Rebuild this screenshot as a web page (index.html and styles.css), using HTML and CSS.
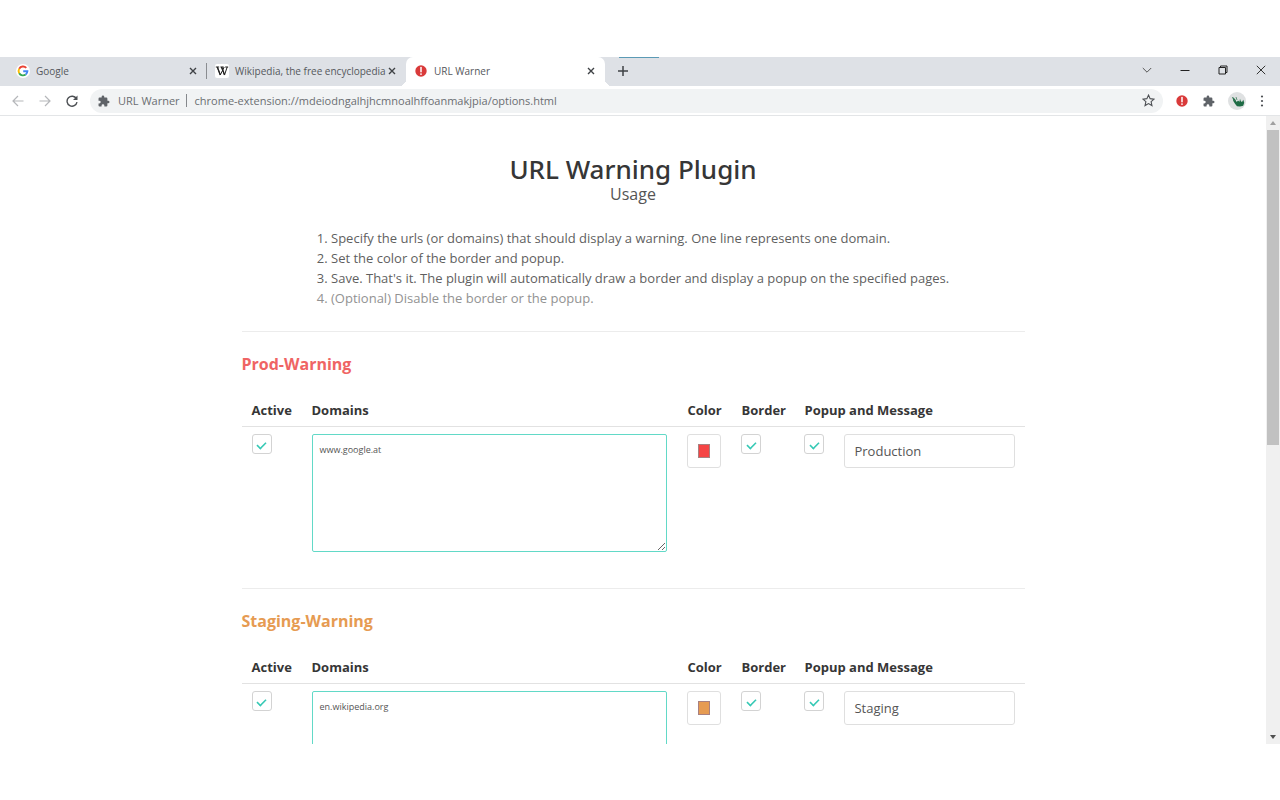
FILE: index.html
```html
<!DOCTYPE html>
<html lang="en">
<head>
<meta charset="utf-8">
<title>URL Warner</title>
<link rel="stylesheet" href="styles.css">
</head>
<body>
<svg class="defs" aria-hidden="true">
  <symbol id="puzzle" viewBox="1 0 23 23"><path d="M20.5 11H19V7a2 2 0 0 0-2-2h-4V3.500a2.500 2.500 0 0 0-5 0V5H4a2 2 0 0 0-2 2v3.800h1.500a2.700 2.700 0 0 1 0 5.400H2V20a2 2 0 0 0 2 2h3.800v-1.500a2.700 2.700 0 0 1 5.400 0V22H17a2 2 0 0 0 2-2v-4h1.500a2.500 2.500 0 0 0 0-5z" fill="#5f6368"/></symbol>
  <symbol id="alert" viewBox="0 0 12 12"><circle cx="6" cy="6" r="5.700" fill="#d93a3a"/><path d="M6 2.500v4.300" stroke="#fff" stroke-width="1.500" stroke-linecap="round"/><circle cx="6" cy="9.100" r=".9" fill="#fff"/></symbol>
  <symbol id="cross" viewBox="0 0 8 8"><path d="M1 1l6 6M7 1L1 7" stroke="#3f4246" stroke-width="1.400" fill="none"/></symbol>
</svg>
<div class="window">
  <header class="tabs">
    <div class="tab">
      <svg class="favicon" viewBox="0 0 14 14"><circle cx="7" cy="7" r="7" fill="#fff"/><g fill="none" stroke-width="1.900"><path d="M10.300 3.900A4.400 4.400 0 0 0 3.200 4.800" stroke="#ea4335"/><path d="M3.200 4.800A4.400 4.400 0 0 0 3.200 9.200" stroke="#fbbc05"/><path d="M3.200 9.200A4.400 4.400 0 0 0 9.700 10.500" stroke="#34a853"/><path d="M9.700 10.500A4.400 4.400 0 0 0 11.400 7.200H7.200" stroke="#4285f4"/></g></svg>
      <span class="tab-title">Google</span>
      <button class="close" aria-label="Close Google"><svg><use href="#cross"/></svg></button>
    </div>
    <div class="tab divided">
      <svg class="favicon" viewBox="0 0 14 14"><rect width="14" height="14" rx="2" fill="#fff"/><path d="M.8 3h3.400M5.400 3h3.300M10.200 3h3M2.300 3l3 8 3.900-8M6.300 3l3.200 8 2.700-8" fill="none" stroke="#222" stroke-width="1"/><path d="M2.300 3l3 8M6.700 3l2.900 8" stroke="#222" stroke-width="1.300"/></svg>
      <span class="tab-title">Wikipedia, the free encyclopedia</span>
      <button class="close" aria-label="Close Wikipedia"><svg><use href="#cross"/></svg></button>
    </div>
    <div class="tab active">
      <svg class="favicon small"><use href="#alert"/></svg>
      <span class="tab-title">URL Warner</span>
      <button class="close" aria-label="Close URL Warner"><svg><use href="#cross"/></svg></button>
    </div>
    <button class="new-tab" aria-label="New tab"><svg viewBox="0 0 10 10"><path d="M5 0v10M0 5h10" stroke="#3f4246" stroke-width="1.500"/></svg></button>
    <span class="accent"></span>
    <div class="window-buttons">
      <button aria-label="Search tabs"><svg viewBox="0 0 10 10"><path d="M.8 3L5 7.200 9.200 3" fill="none" stroke="#555" stroke-width="1"/></svg></button>
      <button aria-label="Minimize"><svg viewBox="0 0 10 10"><path d="M.5 5.500h9" stroke="#222"/></svg></button>
      <button aria-label="Restore"><svg viewBox="0 0 10 10"><path d="M1 2.500h6.500V9H1zM2.500 2.500V1H9v6.500H7.500" fill="none" stroke="#222"/></svg></button>
      <button aria-label="Close window"><svg viewBox="0 0 10 10"><path d="M.8.8l8.400 8.400M9.200.8L.8 9.200" stroke="#333" stroke-width="1"/></svg></button>
    </div>
  </header>
  <nav class="toolbar">
    <div class="nav-buttons">
      <button aria-label="Back"><svg viewBox="0 0 12 12"><path d="M11.500 6H1M6 1L1 6l5 5" fill="none" stroke="#b5b7ba" stroke-width="1.200"/></svg></button>
      <button aria-label="Forward"><svg viewBox="0 0 12 12"><path d="M.5 6H11M6 1l5 5-5 5" fill="none" stroke="#b5b7ba" stroke-width="1.200"/></svg></button>
      <button aria-label="Reload"><svg viewBox="0 0 12 12"><path d="M10.400 3.700A5 5 0 1 0 11 7.200" fill="none" stroke="#4c4f53" stroke-width="1.400"/><path d="M11.500.5v4.500H7z" fill="#4c4f53"/></svg></button>
    </div>
    <div class="address">
      <svg class="site-icon"><use href="#puzzle"/></svg>
      <span class="site">URL Warner</span>
      <span class="url">chrome-extension://mdeiodngalhjhcmnoalhffoanmakjpia/options.html</span>
      <button class="star" aria-label="Bookmark"><svg viewBox="0 0 12 12"><path d="M6 1l1.500 3.300 3.600.4-2.700 2.400.8 3.600L6 8.900l-3.200 1.800.8-3.600L.9 4.700l3.600-.4z" fill="none" stroke="#4c4f53"/></svg></button>
    </div>
    <div class="extensions">
      <button aria-label="URL Warner"><svg><use href="#alert"/></svg></button>
      <button aria-label="Extensions"><svg><use href="#puzzle"/></svg></button>
      <button aria-label="Profile" class="profile"><svg viewBox="0 0 18 18"><circle cx="9" cy="9" r="9" fill="#dfe1e2"/><path d="M4.500 5l2.500 2 1.700 3L10 8.500l1.500 1.200.5-3 .8 2.500 1.200.8 1.300-2.200.9 3-1 2.900-3.200.8-3-.3-2-2.500L5.300 9z" fill="#1f6b45"/><path d="M4.500 5l2 4M8 5l1 3" stroke="#3d7d5c" stroke-width=".8"/></svg></button>
      <button aria-label="Menu" class="menu"><svg viewBox="0 0 4 12"><g fill="#4c4f53"><circle cx="2" cy="1.500" r="1.100"/><circle cx="2" cy="6" r="1.100"/><circle cx="2" cy="10.500" r="1.100"/></g></svg></button>
    </div>
  </nav>
  <div class="viewport">
    <main class="page">
      <h1>URL Warning Plugin</h1>
      <p class="subtitle">Usage</p>
      <ol class="usage">
        <li>Specify the urls (or domains) that should display a warning. One line represents one domain.</li>
        <li>Set the color of the border and popup.</li>
        <li>Save. That's it. The plugin will automatically draw a border and display a popup on the specified pages.</li>
        <li class="optional">(Optional) Disable the border or the popup.</li>
      </ol>
      <section class="warning prod">
        <h2>Prod-Warning</h2>
        <table>
          <colgroup><col class="c-active"><col><col class="c-color"><col class="c-border"><col class="c-popup"><col class="c-message"></colgroup>
          <thead><tr><th>Active</th><th>Domains</th><th>Color</th><th>Border</th><th colspan="2">Popup and Message</th></tr></thead>
          <tbody><tr>
            <td><input type="checkbox" aria-label="Active" checked></td>
            <td><textarea aria-label="Domains" spellcheck="false">www.google.at</textarea></td>
            <td><input type="color" aria-label="Color" value="#f54545"></td>
            <td><input type="checkbox" aria-label="Border" checked></td>
            <td><input type="checkbox" aria-label="Popup" checked></td>
            <td><input type="text" aria-label="Message" value="Production"></td>
          </tr></tbody>
        </table>
      </section>
      <section class="warning staging">
        <h2>Staging-Warning</h2>
        <table>
          <colgroup><col class="c-active"><col><col class="c-color"><col class="c-border"><col class="c-popup"><col class="c-message"></colgroup>
          <thead><tr><th>Active</th><th>Domains</th><th>Color</th><th>Border</th><th colspan="2">Popup and Message</th></tr></thead>
          <tbody><tr>
            <td><input type="checkbox" aria-label="Active" checked></td>
            <td><textarea aria-label="Domains" spellcheck="false">en.wikipedia.org</textarea></td>
            <td><input type="color" aria-label="Color" value="#e69b52"></td>
            <td><input type="checkbox" aria-label="Border" checked></td>
            <td><input type="checkbox" aria-label="Popup" checked></td>
            <td><input type="text" aria-label="Message" value="Staging"></td>
          </tr></tbody>
        </table>
      </section>
    </main>
    <div class="scrollbar" aria-hidden="true">
      <svg viewBox="0 0 14 14"><path d="M4 9l3-4 3 4z" fill="#a0a0a0"/></svg>
      <div class="track"><div class="thumb"></div></div>
      <svg viewBox="0 0 14 14"><path d="M4 5h6L7 9z" fill="#505050"/></svg>
    </div>
  </div>
</div>
</body>
</html>
```
FILE: styles.css
```css
* { box-sizing: border-box; }
body { margin: 0; padding: 57px 0 56px; height: 100vh; background: #fff; color: #555; font: 13px/20px "Open Sans", "Noto Sans", sans-serif; }
.defs { position: absolute; width: 0; height: 0; }
button { border: 0; padding: 0; background: none; display: flex; align-items: center; justify-content: center; }
svg { display: block; flex: none; }
h1, h2, p, ol { margin: 0; padding: 0; }

.window { height: 100%; display: flex; flex-direction: column; overflow: hidden; }

.tabs { flex: none; height: 29px; position: relative; display: flex; background: #dee1e6; padding-left: 8px; }
.tab { flex: 0 1 199px; display: flex; align-items: center; padding: 0 8px 2px; font-size: 10px; color: #55585c; white-space: nowrap; }
.tab-title { flex: 1; padding-left: 6px; }
.tab.divided { position: relative; }
.tab.divided::before { content: ""; position: absolute; left: -1px; top: 6px; height: 16px; border-left: 1px solid #8a8d91; }
.tab.active { position: relative; background: #fff; border-radius: 7px 7px 0 0; }
.tab.active::before, .tab.active::after { content: ""; position: absolute; bottom: 0; width: 7px; height: 7px; }
.tab.active::before { left: -7px; background: radial-gradient(circle at 0 0, transparent 7px, #fff 7px); }
.tab.active::after { right: -7px; background: radial-gradient(circle at 100% 0, transparent 7px, #fff 7px); }
.favicon { width: 14px; height: 14px; }
.favicon.small { width: 12px; height: 12px; margin: 0 1px; }
.close { width: 12px; height: 16px; }
.close svg { width: 8px; height: 8px; }
.new-tab { width: 36px; padding-bottom: 1px; }
.new-tab svg { width: 10px; height: 10px; }
.accent { position: absolute; left: 619px; top: 0; width: 40px; border-top: 1px solid #5b9ab5; }
.window-buttons { margin-left: auto; display: flex; }
.window-buttons button { width: 38px; padding-bottom: 4px; }
.window-buttons svg { width: 10px; height: 10px; }

.toolbar { flex: none; height: 30px; display: flex; align-items: center; border-bottom: 1px solid #e3e5e7; padding: 0 7px 0 4px; color: #6b6e72; }
.nav-buttons, .extensions { display: flex; }
.nav-buttons button, .extensions button { width: 27px; height: 24px; }
.nav-buttons svg, .extensions svg { width: 12px; height: 12px; }
.address { flex: 1; height: 24px; display: flex; align-items: center; margin: 0 5px; padding: 0 8px; border-radius: 12px; background: #f1f3f4; font-size: 11px; line-height: 16px; white-space: nowrap; }
.site-icon { width: 12px; height: 12px; }
.site { padding: 0 6px 0 8px; border-right: 1px solid #85888c; line-height: 13px; }
.url { padding-left: 8px; }
.star { margin-left: auto; }
.star svg { width: 13px; height: 13px; }
.extensions .profile { width: 29px; }
.extensions .profile svg { width: 18px; height: 18px; }
.extensions .menu { width: 22px; }
.extensions .menu svg { width: 4px; }

.viewport { flex: 1; min-height: 0; display: flex; overflow: hidden; }
.page { flex: 1; min-width: 0; padding: 39px 24px; }
.page > * { max-width: 783px; margin-left: auto; margin-right: auto; }
h1 { font-family: "Noto Sans", sans-serif; font-size: 26px; line-height: 28px; font-weight: 500; color: #363636; text-align: center; }
.subtitle { font-size: 16px; line-height: 22px; text-align: center; }
.usage { width: fit-content; margin-top: 23px; list-style-position: inside; color: #5f5f5f; }
.optional { color: #929292; }

.warning { margin-top: 23px; border-top: 1px solid #ececec; padding-top: 21px; }
.warning + .warning { margin-top: 36px; }
h2 { font-size: 16px; line-height: 22px; font-weight: 700; }
.prod h2 { color: #ef6464; }
.staging h2 { color: #e69b52; }
table { width: 100%; margin-top: 19px; border-collapse: separate; border-spacing: 0; table-layout: fixed; }
.c-active { width: 60px; }
.c-color { width: 54px; }
.c-border { width: 63px; }
.c-popup { width: 40px; }
.c-message { width: 190px; }
th { height: 33px; padding: 0 0 0 10px; border-bottom: 1px solid #e2e2e2; text-align: left; font-weight: 700; color: #363636; white-space: nowrap; }
td { padding: 7px 10px 0; vertical-align: top; }
input, textarea { display: block; margin: 0; border: 1px solid #dfdfdf; border-radius: 3px; background: #fff; color: #555; font-family: inherit; }
input[type="checkbox"] { appearance: none; width: 20px; height: 20px; border-color: #d3d3d3; display: grid; place-items: center; }
input[type="checkbox"]:checked::after { content: ""; width: 9px; height: 5px; border: solid #35c9b5; border-width: 0 0 2px 2px; transform: rotate(-45deg) scale(0.8); }
input[type="color"] { appearance: none; width: 34px; height: 34px; padding: 9px 10px; }
input[type="color"]::-webkit-color-swatch-wrapper { padding: 0; }
input[type="color"]::-webkit-color-swatch { border: 1px solid #a88080; }
input[type="text"] { width: 100%; height: 34px; padding: 0 9px; font-size: 13px; }
textarea { width: 100%; height: 118px; padding: 8px 7px; border-color: #62d9c7; border-radius: 2px; font-size: 9px; line-height: 14px; resize: vertical; }

.scrollbar { flex: none; width: 14px; display: flex; flex-direction: column; background: #f0f0f0; }
.scrollbar svg { width: 14px; height: 14px; }
.track { flex: 1; padding: 0 1px; }
.thumb { height: 52.5%; background: #c1c1c1; }
```
